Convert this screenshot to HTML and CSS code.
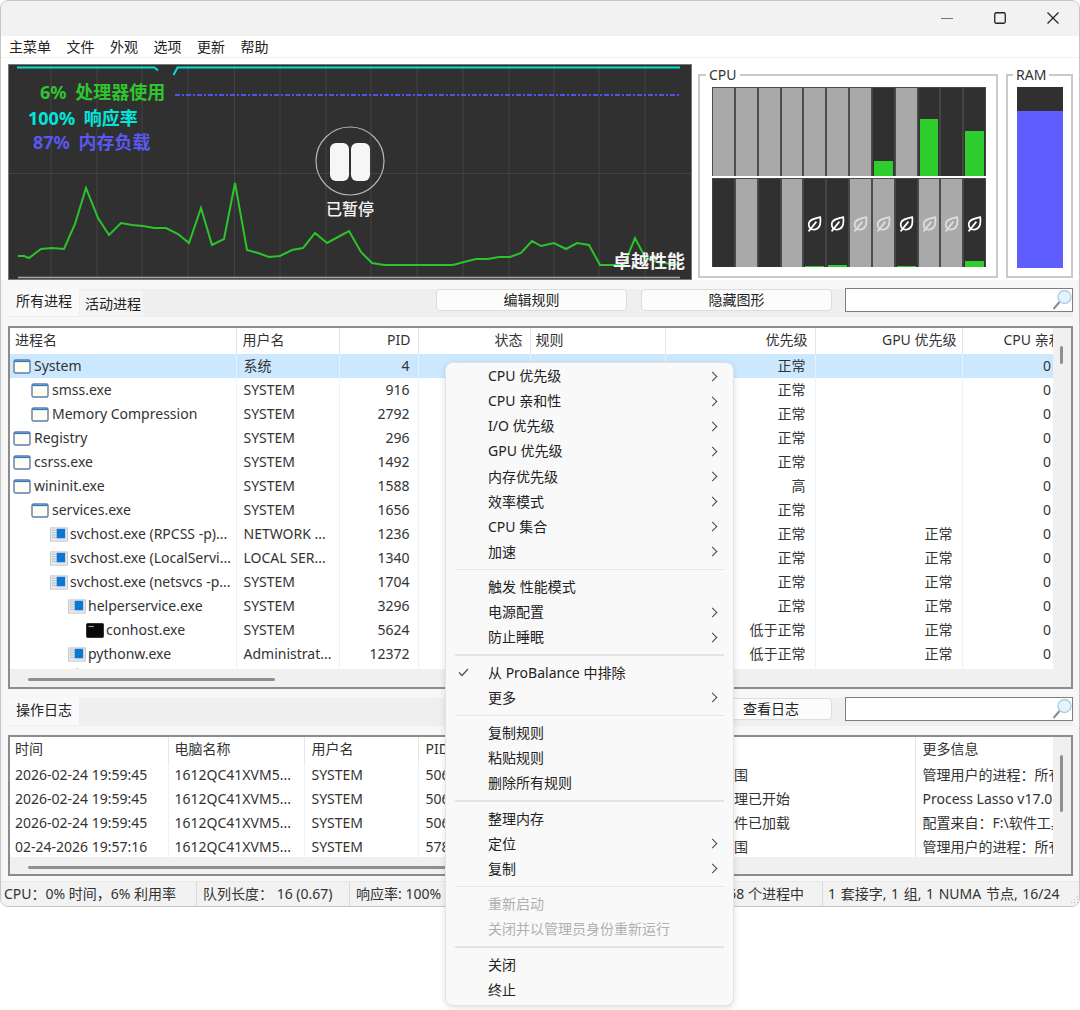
FILE: index.html
```html
<!DOCTYPE html>
<html lang="zh-CN">
<head>
    <meta charset="UTF-8">
    <title>Process Lasso</title>
    <link rel="stylesheet" href="styles.css">
</head>
<body>
    <svg class="defs" width="0" height="0">
        <symbol id="leaf" viewBox="0 0 15 16">
            <path d="M13.2 1.2C14 7 13.4 12.6 7.6 13.6C3.6 14.2 1.4 11.2 1.8 7.6C2.3 3.6 7.4 2.4 13.2 1.2Z" fill="none" stroke="currentColor" stroke-width="1.7"/>
            <path d="M1.6 15.4L9.4 5.6" fill="none" stroke="currentColor" stroke-width="1.7"/>
        </symbol>
        <symbol id="win" viewBox="0 0 18 15">
            <rect x="1" y="1" width="16" height="13" rx="1.5" fill="#fffdf2" stroke="#5c7dab" stroke-width="1.4"/>
            <path d="M1.5 2.4H16.5" stroke="#2f78c4" stroke-width="1.4"/>
        </symbol>
        <symbol id="svc" viewBox="0 0 19 15">
            <rect x="0.5" y="0.5" width="18" height="14" fill="#e6e8ec" stroke="#c4c8ce"/>
            <path d="M2 3H6M2 5.5H6M2 8H6M2 10.5H6" stroke="#b4b8be"/>
            <rect x="7" y="1.5" width="9" height="10" fill="#0c78d2"/>
        </symbol>
        <symbol id="con" viewBox="0 0 18 15">
            <rect x="0.5" y="0.5" width="17" height="14" rx="1" fill="#0a0a0a" stroke="#333"/>
            <path d="M2.5 3.5H8" stroke="#999" stroke-width="1.2"/>
        </symbol>
        <symbol id="app" viewBox="0 0 18 15">
            <circle cx="9" cy="7" r="6.5" fill="#f58a3c"/>
        </symbol>
        <symbol id="lens" viewBox="0 0 20 22">
            <circle cx="12.5" cy="8" r="6.5" fill="#e6f3fb" stroke="#a9d0e6" stroke-width="1.4"/>
            <path d="M7.5 13L1.5 20" stroke="#8d8d8d" stroke-width="2"/>
        </symbol>
    </svg>

    <div class="window">
        <div class="titlebar">
            <div class="win-btn">
                <svg width="12" height="12" viewBox="0 0 12 12"><path d="M0 6.5H12" stroke="#777" stroke-width="1"/></svg>
            </div>
            <div class="win-btn">
                <svg width="12" height="12" viewBox="0 0 12 12"><rect x="0.75" y="0.75" width="10.5" height="10.5" rx="1.5" fill="none" stroke="#222" stroke-width="1.3"/></svg>
            </div>
            <div class="win-btn">
                <svg width="12" height="12" viewBox="0 0 12 12"><path d="M0.5 0.5L11.5 11.5M11.5 0.5L0.5 11.5" stroke="#222" stroke-width="1.2"/></svg>
            </div>
        </div>

        <div class="menubar">
            <span>主菜单</span><span>文件</span><span>外观</span><span>选项</span><span>更新</span><span>帮助</span>
        </div>

        <div class="top-panel">
            <svg class="graph" width="684" height="216" viewBox="8 64 684 216">
                <rect x="8.5" y="64.5" width="683" height="215" fill="#303030" stroke="#777"/>
                <path class="grid-line" d="M51 65V279M97 65V279M142 65V279M188 65V279M234.5 65V279M280 65V279M326 65V279M371 65V279M417 65V279M463 65V279M509 65V279M554 65V279M599 65V279M645 65V279M9 173.5H691"/>
                <path class="ram-line" d="M175 95H680"/>
                <path class="resp-line" d="M17 67.5H154.5L158 70.5M173.5 75L177.5 67.5H680"/>
                <path class="base-line" d="M18 277.5H680"/>
                <polyline class="cpu-line" points="18,256 24,256 29,258 41,249 52,248 64,249 75,224 86,188 98,218 109,235 121,223 132,225 143,226 154,228 166,228 178,234 189,243 201,208 212,245 224,239 235,183 247,250 258,253 269,257 280,256 292,250 303,248 315,233 327,243 338,237 349,231 361,252 372,263 384,265 453,265 464,262 476,259 488,259 499,257 510,257 521,253 532,241 541,246 554,243 566,249 577,243 589,245 600,265 624,265 635,238 645,257 657,262 680,265"/>
                <text class="g-label g-cpu" x="40" y="99">6% 处理器使用</text>
                <text class="g-label g-resp" x="28" y="125">100% 响应率</text>
                <text class="g-label g-ram" x="33" y="149">87% 内存负载</text>
                <circle cx="350" cy="161" r="34" fill="none" stroke="#b4b4b4" stroke-width="1.2"/>
                <rect x="330" y="143" width="19" height="38" rx="6" fill="#f6f6f6"/>
                <rect x="351" y="143" width="19" height="38" rx="6" fill="#f6f6f6"/>
                <text class="g-pause" x="350" y="215">已暂停</text>
                <text class="g-mode" x="613" y="268">卓越性能</text>
            </svg>

            <fieldset class="meter cpu-meter">
                <legend>CPU</legend>
                <div class="core-row">
                    <div class="core parked"></div><div class="core parked"></div><div class="core parked"></div><div class="core parked"></div>
                    <div class="core parked"></div><div class="core parked"></div><div class="core parked"></div>
                    <div class="core"><div class="load" style="height:15px"></div></div>
                    <div class="core parked"></div>
                    <div class="core"><div class="load" style="height:57px"></div></div>
                    <div class="core"></div>
                    <div class="core"><div class="load" style="height:45px"></div></div>
                </div>
                <div class="core-row">
                    <div class="core"></div>
                    <div class="core parked"></div>
                    <div class="core"></div>
                    <div class="core parked"></div>
                    <div class="core"><svg class="leaf"><use href="#leaf"/></svg><div class="load" style="height:1px"></div></div>
                    <div class="core"><svg class="leaf"><use href="#leaf"/></svg><div class="load" style="height:2px"></div></div>
                    <div class="core parked"><svg class="leaf"><use href="#leaf"/></svg></div>
                    <div class="core parked"><svg class="leaf"><use href="#leaf"/></svg></div>
                    <div class="core"><svg class="leaf"><use href="#leaf"/></svg><div class="load" style="height:1px"></div></div>
                    <div class="core parked"><svg class="leaf"><use href="#leaf"/></svg></div>
                    <div class="core parked"><svg class="leaf"><use href="#leaf"/></svg></div>
                    <div class="core"><svg class="leaf"><use href="#leaf"/></svg><div class="load" style="height:6px"></div></div>
                </div>
            </fieldset>

            <fieldset class="meter ram-meter">
                <legend>RAM</legend>
                <div class="ram-bar"><div class="ram-fill" style="height:157px"></div></div>
            </fieldset>
        </div>

        <div class="toolbar">
            <div class="tab active">所有进程</div>
            <div class="tab second">活动进程</div>
            <button class="tool-btn wide first">编辑规则</button>
            <button class="tool-btn wide">隐藏图形</button>
            <div class="search"><svg class="lens"><use href="#lens"/></svg></div>
        </div>

        <div class="frame proc-frame">
            <div class="frame-main">
                <div class="view">
                    <table class="list proc-list">
                        <colgroup>
                            <col style="width:226px"><col style="width:103px"><col style="width:79px"><col style="width:112px">
                            <col style="width:135px"><col style="width:150px"><col style="width:147px"><col style="width:91px">
                        </colgroup>
                        <thead>
                            <tr>
                                <th>进程名</th><th>用户名</th><th class="num">PID</th><th class="num">状态</th>
                                <th>规则</th><th class="num">优先级</th><th class="num">GPU 优先级</th><th class="clip">CPU 亲和性</th>
                            </tr>
                        </thead>
                        <tbody>
                            <tr class="selected"><td class="name lv0"><svg class="ico"><use href="#win"/></svg>System</td><td>系统</td><td class="num">4</td><td></td><td></td><td class="num">正常</td><td class="num"></td><td class="num last">0</td></tr>
                            <tr><td class="name lv1"><svg class="ico"><use href="#win"/></svg>smss.exe</td><td>SYSTEM</td><td class="num">916</td><td></td><td></td><td class="num">正常</td><td class="num"></td><td class="num last">0</td></tr>
                            <tr><td class="name lv1"><svg class="ico"><use href="#win"/></svg>Memory Compression</td><td>SYSTEM</td><td class="num">2792</td><td></td><td></td><td class="num">正常</td><td class="num"></td><td class="num last">0</td></tr>
                            <tr><td class="name lv0"><svg class="ico"><use href="#win"/></svg>Registry</td><td>SYSTEM</td><td class="num">296</td><td></td><td></td><td class="num">正常</td><td class="num"></td><td class="num last">0</td></tr>
                            <tr><td class="name lv0"><svg class="ico"><use href="#win"/></svg>csrss.exe</td><td>SYSTEM</td><td class="num">1492</td><td></td><td></td><td class="num">正常</td><td class="num"></td><td class="num last">0</td></tr>
                            <tr><td class="name lv0"><svg class="ico"><use href="#win"/></svg>wininit.exe</td><td>SYSTEM</td><td class="num">1588</td><td></td><td></td><td class="num">高</td><td class="num"></td><td class="num last">0</td></tr>
                            <tr><td class="name lv1"><svg class="ico"><use href="#win"/></svg>services.exe</td><td>SYSTEM</td><td class="num">1656</td><td></td><td></td><td class="num">正常</td><td class="num"></td><td class="num last">0</td></tr>
                            <tr><td class="name lv2"><svg class="ico"><use href="#svc"/></svg>svchost.exe (RPCSS -p)...</td><td>NETWORK ...</td><td class="num">1236</td><td></td><td></td><td class="num">正常</td><td class="num">正常</td><td class="num last">0</td></tr>
                            <tr><td class="name lv2"><svg class="ico"><use href="#svc"/></svg>svchost.exe (LocalServi...</td><td>LOCAL SER...</td><td class="num">1340</td><td></td><td></td><td class="num">正常</td><td class="num">正常</td><td class="num last">0</td></tr>
                            <tr><td class="name lv2"><svg class="ico"><use href="#svc"/></svg>svchost.exe (netsvcs -p...</td><td>SYSTEM</td><td class="num">1704</td><td></td><td></td><td class="num">正常</td><td class="num">正常</td><td class="num last">0</td></tr>
                            <tr><td class="name lv3"><svg class="ico"><use href="#svc"/></svg>helperservice.exe</td><td>SYSTEM</td><td class="num">3296</td><td></td><td></td><td class="num">正常</td><td class="num">正常</td><td class="num last">0</td></tr>
                            <tr><td class="name lv4"><svg class="ico"><use href="#con"/></svg>conhost.exe</td><td>SYSTEM</td><td class="num">5624</td><td></td><td></td><td class="num">低于正常</td><td class="num">正常</td><td class="num last">0</td></tr>
                            <tr><td class="name lv3"><svg class="ico"><use href="#svc"/></svg>pythonw.exe</td><td>Administrat...</td><td class="num">12372</td><td></td><td></td><td class="num">低于正常</td><td class="num">正常</td><td class="num last">0</td></tr>
                            <tr class="cut-row"><td class="name lv3"><svg class="ico"><use href="#app"/></svg></td><td></td><td></td><td></td><td></td><td></td><td></td><td class="last"></td></tr>
                        </tbody>
                    </table>
                </div>
                <div class="vtrack"><div class="vthumb proc-vthumb"></div></div>
            </div>
            <div class="htrack"><div class="hthumb"></div></div>
        </div>

        <div class="toolbar log-bar">
            <div class="tab active">操作日志</div>
            <button class="tool-btn first log-btn">查看日志</button>
            <div class="search"><svg class="lens"><use href="#lens"/></svg></div>
        </div>

        <div class="frame log-frame">
            <div class="frame-main">
                <div class="view">
                    <table class="list log-list">
                        <colgroup>
                            <col style="width:158px"><col style="width:136px"><col style="width:114px"><col style="width:80px">
                            <col style="width:187px"><col style="width:230px"><col style="width:138px">
                        </colgroup>
                        <thead>
                            <tr><th>时间</th><th>电脑名称</th><th>用户名</th><th>PID</th><th></th><th></th><th>更多信息</th></tr>
                        </thead>
                        <tbody>
                            <tr><td>2026-02-24 19:59:45</td><td>1612QC41XVM5...</td><td>SYSTEM</td><td>5064</td><td></td><td>管理范围</td><td>管理用户的进程：所有用户</td></tr>
                            <tr><td>2026-02-24 19:59:45</td><td>1612QC41XVM5...</td><td>SYSTEM</td><td>5064</td><td></td><td>进程管理已开始</td><td>Process Lasso v17.0.0</td></tr>
                            <tr><td>2026-02-24 19:59:45</td><td>1612QC41XVM5...</td><td>SYSTEM</td><td>5064</td><td></td><td>配置文件已加载</td><td>配置来自：F:\软件工具</td></tr>
                            <tr><td>02-24-2026 19:57:16</td><td>1612QC41XVM5...</td><td>SYSTEM</td><td>5784</td><td></td><td>管理范围</td><td>管理用户的进程：所有用户</td></tr>
                        </tbody>
                    </table>
                </div>
                <div class="vtrack"><div class="vthumb log-vthumb"></div></div>
            </div>
            <div class="htrack"><div class="hthumb log-hthumb"></div></div>
        </div>

        <div class="statusbar">
            <div class="status-cell s-cpu">CPU：0% 时间，6% 利用率</div>
            <div class="status-cell s-queue">队列长度： 16 (0.67)</div>
            <div class="status-cell s-resp">响应率: 100%</div>
            <div class="status-cell s-proc">158 个进程中</div>
            <div class="status-cell s-topo">1 套接字, 1 组, 1 NUMA 节点, 16/24</div>
            <svg class="grip" width="10" height="10" viewBox="0 0 10 10"><path d="M8 1h1v1H8zM5 4h1v1H5zM8 4h1v1H8zM2 7h1v1H2zM5 7h1v1H5zM8 7h1v1H8z" fill="#bbb"/></svg>
        </div>
    </div>

    <div class="context-menu">
        <div class="menu-item sub">CPU 优先级</div>
        <div class="menu-item sub">CPU 亲和性</div>
        <div class="menu-item sub">I/O 优先级</div>
        <div class="menu-item sub">GPU 优先级</div>
        <div class="menu-item sub">内存优先级</div>
        <div class="menu-item sub">效率模式</div>
        <div class="menu-item sub">CPU 集合</div>
        <div class="menu-item sub">加速</div>
        <div class="menu-sep"></div>
        <div class="menu-item">触发 性能模式</div>
        <div class="menu-item sub">电源配置</div>
        <div class="menu-item sub">防止睡眠</div>
        <div class="menu-sep"></div>
        <div class="menu-item"><svg class="check" width="11" height="9" viewBox="0 0 11 9"><path d="M1 4.5L4 7.5L10 1" fill="none" stroke="#555" stroke-width="1.3"/></svg>从 ProBalance 中排除</div>
        <div class="menu-item sub">更多</div>
        <div class="menu-sep"></div>
        <div class="menu-item">复制规则</div>
        <div class="menu-item">粘贴规则</div>
        <div class="menu-item">删除所有规则</div>
        <div class="menu-sep"></div>
        <div class="menu-item">整理内存</div>
        <div class="menu-item sub">定位</div>
        <div class="menu-item sub">复制</div>
        <div class="menu-sep"></div>
        <div class="menu-item disabled">重新启动</div>
        <div class="menu-item disabled">关闭并以管理员身份重新运行</div>
        <div class="menu-sep"></div>
        <div class="menu-item">关闭</div>
        <div class="menu-item">终止</div>
    </div>
</body>
</html>
```

FILE: styles.css
```css
body {
    margin: 0;
    background-color: #fff;
    font-family: "Noto Sans", "Noto Sans CJK SC", sans-serif;
    font-size: 14px;
    line-height: 20px;
    color: #333;
}

.defs {
    position: absolute;
}

.window {
    width: 1080px;
    height: 907px;
    box-sizing: border-box;
    border: 1px solid #c6c6c6;
    border-radius: 8px;
    background-color: #f7f7f7;
    overflow: hidden;
}

.titlebar {
    height: 35px;
    background-color: #f2f2f2;
    display: flex;
    justify-content: flex-end;
    align-items: center;
}

.win-btn {
    width: 53px;
    display: flex;
    justify-content: center;
    padding-bottom: 1px;
}

.menubar {
    height: 21px;
    background-color: #fff;
    display: flex;
    padding-left: 8px;
    gap: 15.5px;
    line-height: 21px;
    color: #222;
}

.top-panel {
    height: 223px;
    padding: 6px 0 0 7px;
    box-sizing: border-box;
    background-color: #fff;
    border-top: 1px solid #f2f2f2;
    display: flex;
    align-items: flex-start;
}

.graph {
    display: block;
    flex: none;
}

.grid-line {
    stroke: #434343;
    stroke-width: 1;
    fill: none;
}

.ram-line {
    stroke: #5252e6;
    stroke-width: 2;
    stroke-dasharray: 5 2 2 2;
    fill: none;
}

.resp-line {
    stroke: #00e0d6;
    stroke-width: 2;
    fill: none;
}

.base-line {
    stroke: #a8a8a8;
    stroke-width: 1.5;
    fill: none;
}

.cpu-line {
    stroke: #2bc42b;
    stroke-width: 2;
    fill: none;
}

.g-label {
    font-size: 18px;
    font-weight: 700;
    word-spacing: 4px;
}

.g-cpu {
    fill: #2fc52f;
}

.g-resp {
    fill: #00e6da;
}

.g-ram {
    fill: #5858ee;
}

.g-pause {
    font-size: 16px;
    font-weight: 500;
    fill: #f4f4f4;
    text-anchor: middle;
}

.g-mode {
    font-size: 18px;
    font-weight: 700;
    fill: #f4f4f4;
}

.meter {
    margin: 2px 0 0 6px;
    padding: 3px 0 0 12px;
    height: 212px;
    box-sizing: border-box;
    border: 2px solid #c9c9c9;
    min-width: 0;
}

.meter legend {
    margin-left: -6px;
    padding: 0 3px;
    line-height: 18px;
    color: #333;
}

.cpu-meter {
    width: 300px;
}

.ram-meter {
    width: 67px;
    margin-left: 8px;
    padding-left: 9px;
}

.ram-meter legend {
    margin-left: -4px;
}

.core-row {
    display: grid;
    grid-template-columns: repeat(12, 1fr);
    width: 274px;
    height: 89px;
    background-color: #303030;
    margin-bottom: 2px;
}

.core {
    position: relative;
    display: flex;
    flex-direction: column;
    justify-content: flex-end;
    border: solid #444;
    border-width: 1px 1px 0;
    padding: 0 1px;
}

.core.parked {
    background-color: #a9a9a9;
    border-color: #4c4c4c;
}

.load {
    background-color: #2fce2f;
}

.leaf {
    position: absolute;
    left: 3px;
    top: 37px;
    width: 15px;
    height: 16px;
    color: #fff;
}

.core.parked .leaf {
    color: #dedede;
}

.ram-bar {
    width: 46px;
    height: 181px;
    background-color: #303030;
    display: flex;
    flex-direction: column;
    justify-content: flex-end;
}

.ram-fill {
    background-color: #5e5eff;
}

.toolbar {
    display: flex;
    align-items: flex-start;
    height: 28px;
    margin: 9px 6px 0 7px;
    background-color: #efefef;
}

.tab {
    box-sizing: border-box;
    width: 71px;
    height: 27px;
    padding-left: 8px;
    line-height: 24px;
    color: #222;
}

.tab.active {
    background-color: #f9f9f9;
}

.tab.second {
    width: 63px;
    height: 25px;
    margin: 2px 0 0 1px;
    padding-left: 5px;
    line-height: 25px;
    background-color: #f5f5f5;
}

.tool-btn {
    height: 22px;
    padding: 0;
    border: 1px solid #dcdcdc;
    border-radius: 4px;
    background-color: #fcfcfc;
    font: inherit;
    line-height: 20px;
    color: #222;
}

.tool-btn.wide {
    width: 191px;
    margin-right: 13px;
}

.tool-btn.first {
    margin-left: auto;
}

.tool-btn.wide.first {
    margin-right: 14px;
}

.log-btn {
    width: 122px;
    margin-right: 13px;
}

.search {
    box-sizing: border-box;
    width: 228px;
    height: 24px;
    margin-top: -1px;
    border: 1px solid #7f7f7f;
    background-color: #fff;
    display: flex;
    justify-content: flex-end;
}

.lens {
    width: 20px;
    height: 22px;
}

.frame {
    box-sizing: border-box;
    margin: 9px 6px 0 7px;
    border: 2px solid #8c8c8c;
    background-color: #f0f0f0;
}

.proc-frame {
    height: 363px;
}

.log-frame {
    height: 141px;
}

.frame-main {
    display: flex;
}

.view {
    width: 1043px;
    overflow: hidden;
    background-color: #fff;
}

.proc-frame .view {
    height: 341px;
}

.log-frame .view {
    height: 120px;
}

.list {
    table-layout: fixed;
    border-collapse: collapse;
    width: 1043px;
}

.list th {
    height: 24px;
    padding: 0 0 2px 6px;
    font-weight: 400;
    text-align: left;
    white-space: nowrap;
    overflow: hidden;
    border-right: 1px solid #e6e6e6;
    color: #333;
}

.list th.num {
    text-align: right;
    padding: 0 7px 2px 0;
}

.list th.clip {
    padding-left: 41px;
    border-right: 0;
}

.proc-list th:first-child,
.proc-list th:nth-child(5) {
    padding-left: 5px;
}

.proc-list th:nth-child(7) {
    padding-right: 5px;
}

.list td {
    height: 24px;
    padding: 0 0 0 7px;
    white-space: nowrap;
    overflow: hidden;
    border-right: 1px solid #eaf2fb;
}

.list td.num {
    text-align: right;
    padding: 0 9px 0 0;
}

.proc-list td:nth-child(3) {
    padding-right: 8px;
}

.list td.last {
    padding-right: 2px;
    border-right: 0;
}

.selected td {
    background-color: #cce8ff;
}

.list td.name {
    padding-right: 0;
}

.list td.lv0 { padding-left: 3px; }
.list td.lv1 { padding-left: 21px; }
.list td.lv2 { padding-left: 40px; }
.list td.lv3 { padding-left: 58px; }
.list td.lv4 { padding-left: 76px; }

.ico {
    width: 18px;
    height: 15px;
    margin-right: 2px;
    vertical-align: -3px;
}

.lv0 .ico,
.lv1 .ico {
    margin-right: 3px;
}

.cut-row td {
    vertical-align: top;
}

.cut-row .ico {
    vertical-align: top;
    margin-top: 2px;
}

.log-list th {
    height: 23px;
    padding: 0 0 3px 7px;
}

.log-list tr > :first-child {
    padding-left: 5px;
}

.log-list tr > :nth-child(2) {
    padding-left: 6px;
}

.log-list tr > :nth-child(4),
.log-list tr > :nth-child(5) {
    border-right: 0;
}

.log-list tr > :nth-child(6) {
    border-right-color: #e6e6e6;
}

.vtrack {
    flex: 1;
    display: flex;
    justify-content: center;
    padding-right: 1px;
}

.vthumb {
    width: 3px;
    background-color: #8f8f8f;
    border-radius: 2px;
}

.proc-vthumb {
    height: 18px;
    margin-top: 18px;
}

.log-vthumb {
    height: 57px;
    margin-top: 18px;
}

.htrack {
    box-sizing: border-box;
    height: 18px;
    display: flex;
    align-items: center;
    padding: 3px 0 0 18px;
}

.hthumb {
    width: 247px;
    height: 3px;
    border-radius: 2px;
    background-color: #8f8f8f;
}

.log-hthumb {
    width: 600px;
}

.statusbar {
    height: 24px;
    margin-top: 5px;
    border-top: 1px solid #e8e8e8;
    background-color: #f2f2f2;
    display: flex;
    line-height: 24px;
    white-space: nowrap;
    position: relative;
}

.status-cell {
    box-sizing: border-box;
    border-right: 1px solid #dcdcdc;
    padding-left: 3px;
}

.s-cpu { width: 196px; }
.s-queue { width: 153px; padding-left: 6px; }
.s-resp { width: 150px; padding-left: 6px; }
.s-proc { width: 323px; padding-right: 18px; text-align: right; }
.s-topo { border-right: 0; padding-left: 5px; word-spacing: 1px; }

.grip {
    position: absolute;
    right: 0;
    bottom: 1px;
}

.context-menu {
    position: absolute;
    left: 445px;
    top: 362px;
    width: 289px;
    height: 644px;
    box-sizing: border-box;
    padding-top: 0.6px;
    border: 1px solid #e2e2e2;
    border-radius: 8px;
    background-color: #f9f9f9;
    box-shadow: 0 2px 6px rgba(0, 0, 0, 0.12);
    color: #222;
}

.menu-item {
    height: 25.1px;
    padding-left: 42px;
    display: flex;
    align-items: center;
}

.menu-item.sub::after {
    content: "";
    width: 6px;
    height: 6px;
    margin: 0 17px 0 auto;
    border: solid #444;
    border-width: 1.5px 1.5px 0 0;
    transform: rotate(45deg);
}

.menu-item.disabled {
    color: #b0b0b0;
}

.check {
    margin: 0 19px 0 -30px;
}

.menu-sep {
    height: 1.5px;
    margin: 4.4px 9px;
    background-color: #e4e4e4;
}
```
